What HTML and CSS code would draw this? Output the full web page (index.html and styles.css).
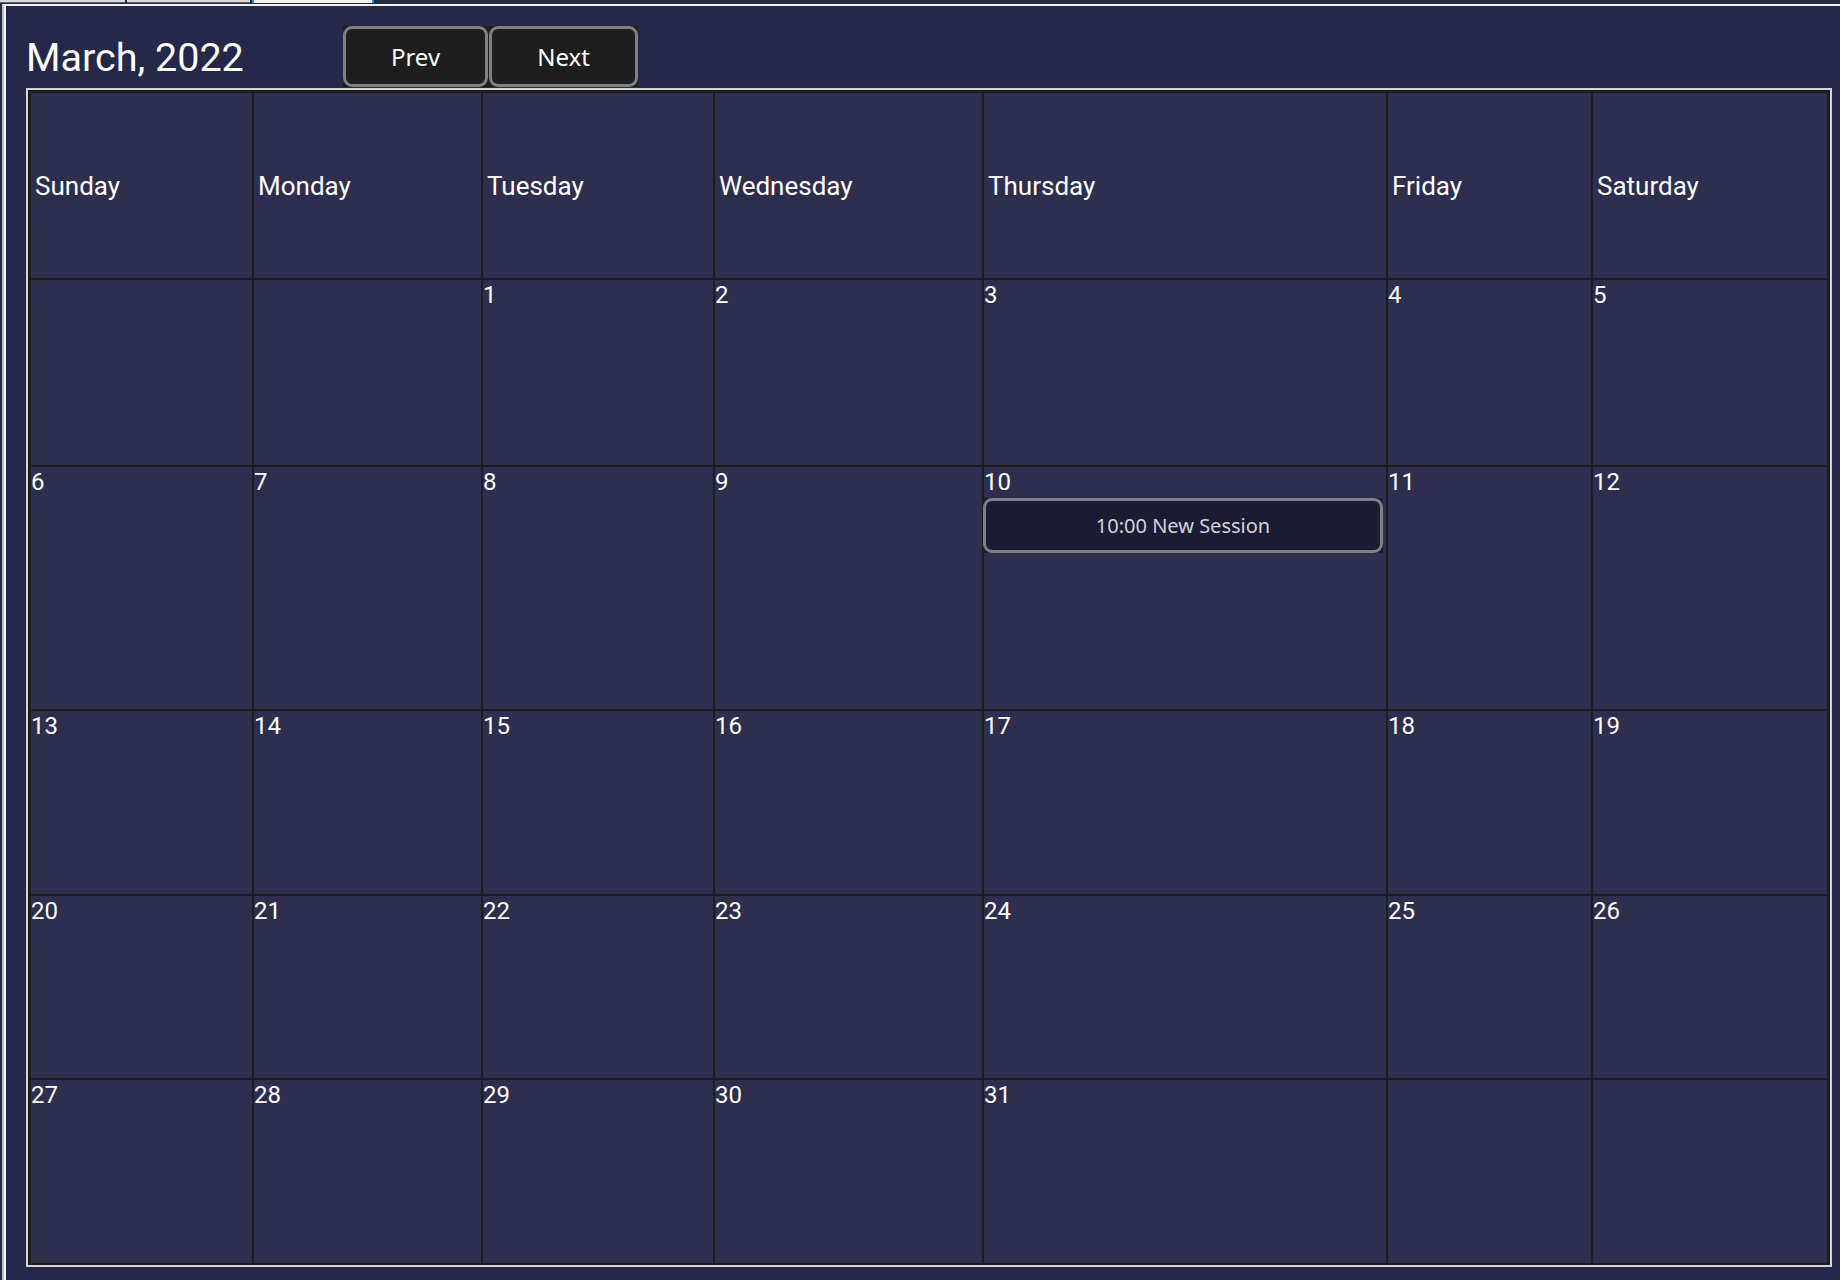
FILE: index.html
```html
<!DOCTYPE html>
<html lang="en">
<head>
<meta charset="utf-8">
<title>Calendar</title>
<link rel="stylesheet" href="styles.css">
</head>
<body>
<div class="tabs">
  <span class="tab"></span>
  <span class="tab tab-second"></span>
  <span class="tab tab-active"></span>
</div>
<div class="window">
  <div class="toolbar">
    <h1 class="title">March, 2022</h1>
    <div class="nav">
      <button class="btn btn-prev"><span class="btn-face">Prev</span></button>
      <button class="btn btn-next"><span class="btn-face">Next</span></button>
    </div>
  </div>
  <div class="board">
    <div class="calendar">
      <div class="head">Sunday</div>
      <div class="head">Monday</div>
      <div class="head">Tuesday</div>
      <div class="head">Wednesday</div>
      <div class="head">Thursday</div>
      <div class="head">Friday</div>
      <div class="head">Saturday</div>

      <div class="day"></div>
      <div class="day"></div>
      <div class="day"><div class="num">1</div></div>
      <div class="day"><div class="num">2</div></div>
      <div class="day"><div class="num">3</div></div>
      <div class="day"><div class="num">4</div></div>
      <div class="day"><div class="num">5</div></div>

      <div class="day"><div class="num">6</div></div>
      <div class="day"><div class="num">7</div></div>
      <div class="day"><div class="num">8</div></div>
      <div class="day"><div class="num">9</div></div>
      <div class="day"><div class="num">10</div>
        <button class="event"><span class="event-face">10:00 New Session</span></button>
      </div>
      <div class="day"><div class="num">11</div></div>
      <div class="day"><div class="num">12</div></div>

      <div class="day"><div class="num">13</div></div>
      <div class="day"><div class="num">14</div></div>
      <div class="day"><div class="num">15</div></div>
      <div class="day"><div class="num">16</div></div>
      <div class="day"><div class="num">17</div></div>
      <div class="day"><div class="num">18</div></div>
      <div class="day"><div class="num">19</div></div>

      <div class="day"><div class="num">20</div></div>
      <div class="day"><div class="num">21</div></div>
      <div class="day"><div class="num">22</div></div>
      <div class="day"><div class="num">23</div></div>
      <div class="day"><div class="num">24</div></div>
      <div class="day"><div class="num">25</div></div>
      <div class="day"><div class="num">26</div></div>

      <div class="day"><div class="num">27</div></div>
      <div class="day"><div class="num">28</div></div>
      <div class="day"><div class="num">29</div></div>
      <div class="day"><div class="num">30</div></div>
      <div class="day"><div class="num">31</div></div>
      <div class="day"></div>
      <div class="day"></div>
    </div>
  </div>
</div>
</body>
</html>
```
FILE: styles.css
```css
html, body {
  margin: 0;
  padding: 0;
  overflow: hidden;
  background: #252848;
  height: 100%;
}

body {
  font-family: Roboto, "Liberation Sans", sans-serif;
  color: #ffffff;
}

.tabs {
  display: flex;
  height: 3px;
  margin-bottom: 1px;
}

.tab {
  display: block;
  width: 125px;
  height: 2px;
  background: #d8d8dc;
  border-bottom: 1px solid #5a5a66;
}

.tab-second {
  margin-left: 2px;
  width: 123px;
}

.tab-active {
  margin-left: 2px;
  width: 118px;
  height: 3px;
  border-bottom: 0;
  background: #f2f2f4;
  border-left: 2px solid #1e90e8;
  border-right: 2px solid #1e90e8;
}

.window {
  margin-left: 2px;
  border-top: 2px solid #f2f2f4;
  border-left: 2px solid #bfc0c9;
  box-shadow: inset 2px 0 0 #f2f2f4;
  height: 1280px;
  box-sizing: border-box;
}

.toolbar {
  display: flex;
  align-items: center;
  padding: 20px 0 0 22px;
  height: 61px;
  margin-bottom: 1px;
}

.title {
  flex: none;
  width: 317px;
  margin: 0;
  padding-top: 2px;
  font-family: Roboto, "Liberation Sans", sans-serif;
  font-weight: 400;
  font-size: 39.5px;
  line-height: normal;
  color: #ffffff;
}

.nav {
  display: flex;
  gap: 1px;
  background: #1e1e1e;
}

.btn {
  display: flex;
  height: 61px;
  padding: 0;
  margin: 0;
  border: 0;
  background: #1e1e1e;
  cursor: pointer;
}

.btn-prev { width: 145px; }
.btn-next { width: 149px; }

.btn-face {
  flex: 1;
  display: flex;
  align-items: center;
  justify-content: center;
  border: 3px solid #808080;
  border-radius: 9px;
  font-family: "Noto Sans", "Open Sans", sans-serif;
  font-size: 24px;
  color: #ffffff;
}

.board {
  width: fit-content;
  margin-left: 22px;
  border: 2px solid #d3d3d6;
}

.calendar {
  display: grid;
  grid-template-columns: 221px 227px 230px 267px 402px 203px 234px;
  grid-template-rows: 185px 185px 242px 183px 182px 183px;
  gap: 2px;
  padding: 3px 3px 2px 3px;
  background: #1e1e1e;
}

.head {
  display: flex;
  align-items: center;
  padding: 0 0 0 4px;
  background: #2e2e4e;
  font-size: 26px;
  color: #ffffff;
}

.day {
  background: #2e2e4e;
  display: flex;
  flex-direction: column;
  align-items: flex-start;
}

.num {
  padding-top: 1px;
  font-size: 24px;
  line-height: normal;
  color: #ffffff;
}

.event {
  display: flex;
  margin: 2px 0 0 -1px;
  width: 400px;
  height: 55px;
  padding: 0;
  border: 0;
  background: #1c1c35;
  cursor: pointer;
}

.event-face {
  flex: 1;
  display: flex;
  align-items: center;
  justify-content: center;
  border: 3px solid #808080;
  border-radius: 9px;
  font-family: "Noto Sans", "Open Sans", sans-serif;
  font-size: 20px;
  color: #d2d2d6;
}
```
